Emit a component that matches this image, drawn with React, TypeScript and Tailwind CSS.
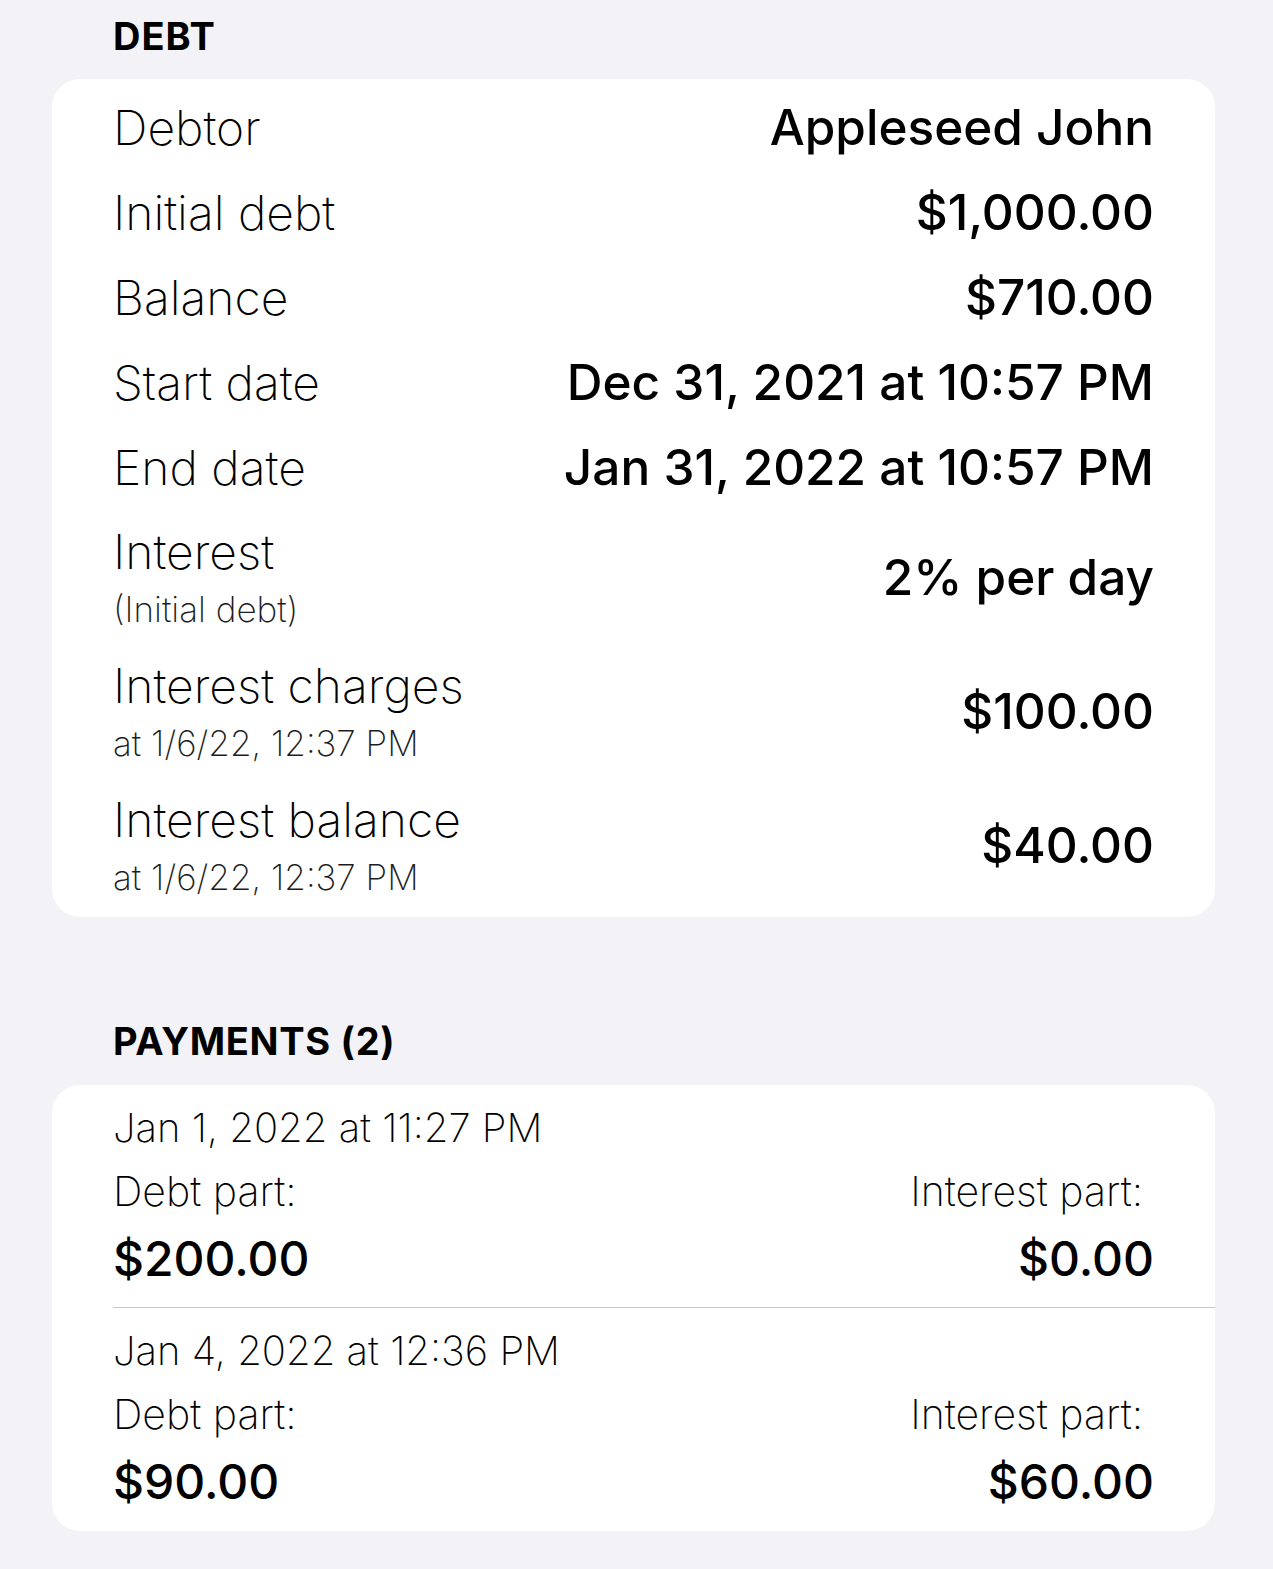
import React from 'react';

const font = { fontFamily: 'Inter, "Noto Sans", sans-serif' };

type Row = { label: string; sub?: string; value: string };

const debtRows: Row[] = [
  { label: 'Debtor', value: 'Appleseed John' },
  { label: 'Initial debt', value: '$1,000.00' },
  { label: 'Balance', value: '$710.00' },
  { label: 'Start date', value: 'Dec 31, 2021 at 10:57 PM' },
  { label: 'End date', value: 'Jan 31, 2022 at 10:57 PM' },
  { label: 'Interest', sub: '(Initial debt)', value: '2% per day' },
  { label: 'Interest charges', sub: 'at 1/6/22, 12:37 PM', value: '$100.00' },
  { label: 'Interest balance', sub: 'at 1/6/22, 12:37 PM', value: '$40.00' },
];

const payments = [
  { date: 'Jan 1, 2022 at 11:27 PM', debt: '$200.00', interest: '$0.00' },
  { date: 'Jan 4, 2022 at 12:36 PM', debt: '$90.00', interest: '$60.00' },
];

function DebtRow({ row }: { row: Row }) {
  if (row.sub) {
    return (
      <div className="flex h-[134px] items-center justify-between">
        <div className="flex flex-col pt-[8px]">
          <span className="text-[48px] font-extralight leading-[56px] text-black">{row.label}</span>
          <span className="text-[35px] font-extralight leading-[58px] text-[#1c1c1e]">{row.sub}</span>
        </div>
        <span className="text-[49.5px] font-medium text-black">{row.value}</span>
      </div>
    );
  }
  return (
    <div className="flex h-[85px] items-center justify-between">
      <span className="text-[48px] font-extralight text-black">{row.label}</span>
      <span className="text-[49.5px] font-medium text-black">{row.value}</span>
    </div>
  );
}

export default function App() {
  return (
    <div className="min-h-[1569px] w-full bg-[#f2f2f7]" style={font}>
      <div className="pb-[7px] pl-[113px] text-[38px] font-bold leading-[72px] tracking-[1px] text-black">
        DEBT
      </div>
      <div className="ml-[52px] w-[1163px] rounded-[28px] bg-white px-[61px] pb-[5px] pt-[6px]">
        {debtRows.map((row) => (
          <DebtRow key={row.label} row={row} />
        ))}
      </div>

      <div className="pb-[8px] pl-[113px] pt-[88px] text-[38px] font-bold leading-[72px] tracking-[0.7px] text-black">
        PAYMENTS (2)
      </div>
      <div className="ml-[52px] w-[1163px] rounded-[28px] bg-white pl-[61px]">
        {payments.map((p, i) => (
          <div
            key={p.date}
            className={
              'pr-[61px] pt-[12px] ' +
              (i < payments.length - 1 ? 'border-b border-[#c6c6c8] pb-[12px]' : 'pb-[13px]')
            }
          >
            <div className="text-[40px] font-extralight leading-[62px] text-black">{p.date}</div>
            <div className="flex justify-between">
              <div className="flex flex-col">
                <span className="text-[41px] font-extralight leading-[64px] text-black">Debt part:</span>
                <span className="text-[48px] font-medium leading-[72px] text-black">{p.debt}</span>
              </div>
              <div className="flex flex-col items-end">
                <span className="pr-[11px] text-[41px] font-extralight leading-[64px] text-black">
                  Interest part:
                </span>
                <span className="text-[48px] font-medium leading-[72px] text-black">{p.interest}</span>
              </div>
            </div>
          </div>
        ))}
      </div>
    </div>
  );
}
